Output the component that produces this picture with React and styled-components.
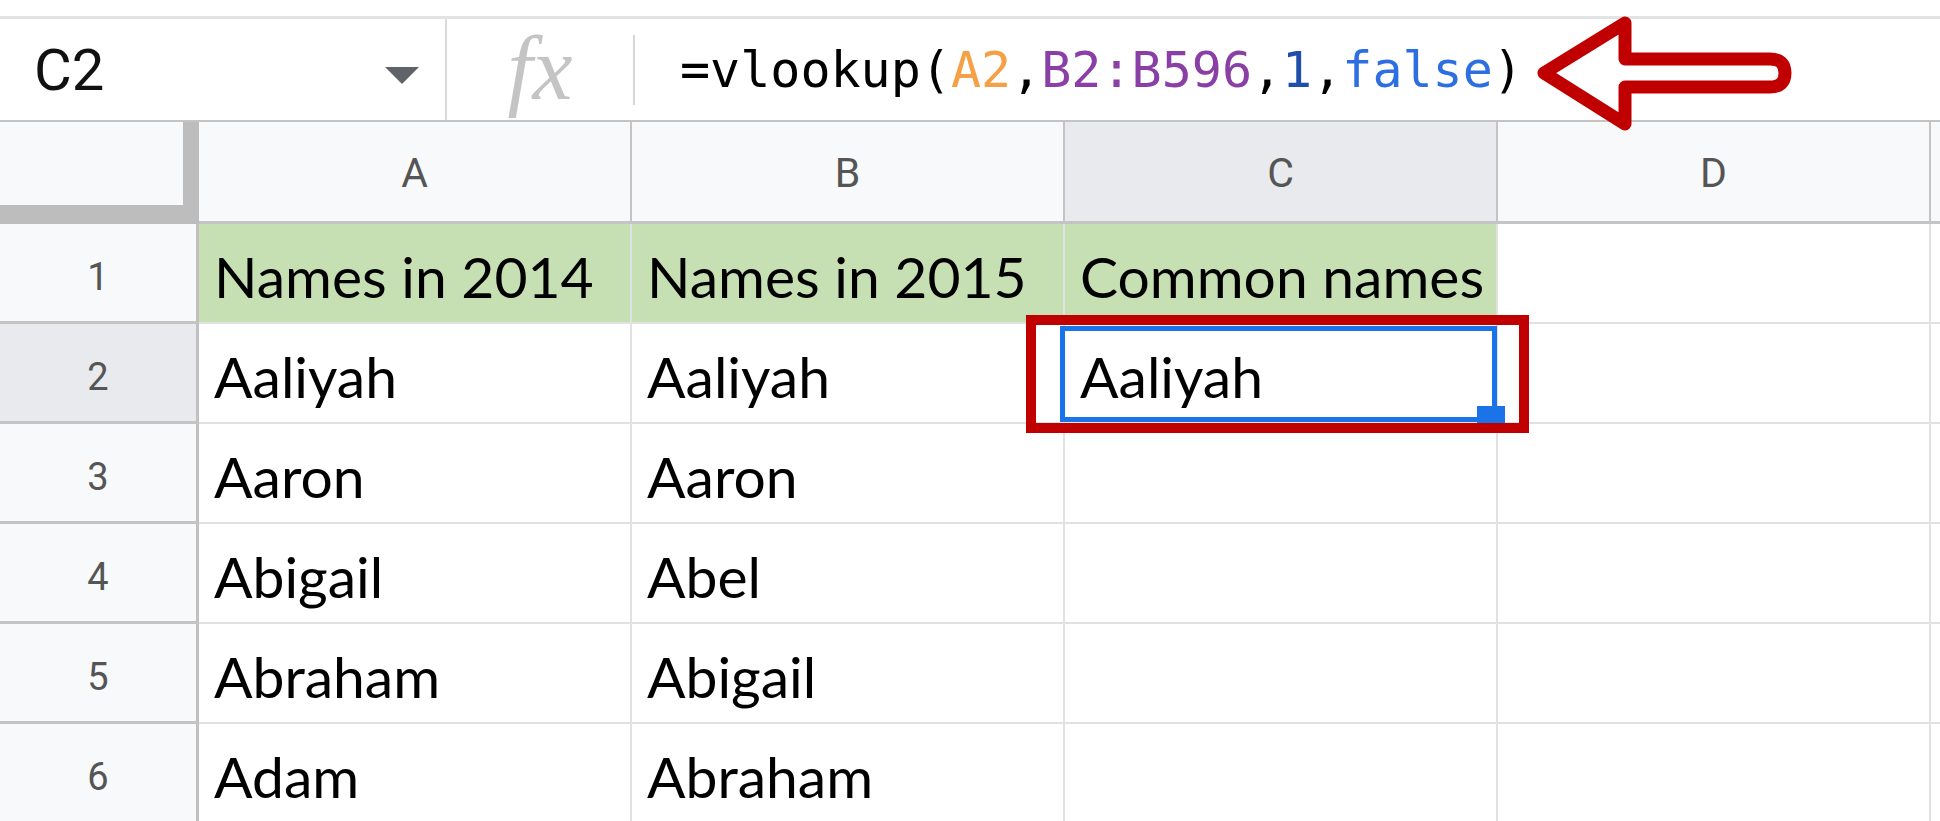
import React from 'react';
import styled, { createGlobalStyle } from 'styled-components';

const GlobalStyle = createGlobalStyle`
  html, body {
    margin: 0;
    padding: 0;
    background: #fff;
    overflow: hidden;
  }
`;

const columns = ['A', 'B', 'C', 'D'];

const rows = [
  { n: 1, cells: ['Names in 2014', 'Names in 2015', 'Common names', ''], green: true },
  { n: 2, cells: ['Aaliyah', 'Aaliyah', 'Aaliyah', ''] },
  { n: 3, cells: ['Aaron', 'Aaron', '', ''] },
  { n: 4, cells: ['Abigail', 'Abel', '', ''] },
  { n: 5, cells: ['Abraham', 'Abigail', '', ''] },
  { n: 6, cells: ['Adam', 'Abraham', '', ''] },
];

const formula = [
  { t: '=vlookup(', tone: 'plain' },
  { t: 'A2', tone: 'orange' },
  { t: ',', tone: 'plain' },
  { t: 'B2:B596', tone: 'purple' },
  { t: ',', tone: 'plain' },
  { t: '1', tone: 'number' },
  { t: ',', tone: 'plain' },
  { t: 'false', tone: 'blue' },
  { t: ')', tone: 'plain' },
];

const tones = {
  plain: '#000000',
  orange: '#f6a046',
  purple: '#8a3fa6',
  number: '#1f4fa8',
  blue: '#2d6fe0',
};

const App = () => {
  return (
    <Page>
      <GlobalStyle />
      <TopStrip />
      <FormulaBar>
        <NameBox>
          <CellRef>C2</CellRef>
          <Caret />
        </NameBox>
        <FxBox>fx</FxBox>
        <Divider />
        <FormulaText>
          {formula.map((p, i) => (
            <Token key={i} $tone={p.tone}>{p.t}</Token>
          ))}
        </FormulaText>
        <Arrow width="270" height="130" viewBox="0 0 270 130">
          <path
            d="M14,63 L95,13 L95,49 L240,49 Q255,49 255,63 Q255,77 240,77 L95,77 L95,114 Z"
            fill="none"
            stroke="#c00000"
            strokeWidth="13"
            strokeLinejoin="round"
          />
        </Arrow>
      </FormulaBar>

      <Sheet>
        <Corner />
        {columns.map((c) => (
          <ColHead key={c} $active={c === 'C'}>{c}</ColHead>
        ))}
        <ColHead $last />

        {rows.map((r) => (
          <React.Fragment key={r.n}>
            <RowHead $active={r.n === 2}>{r.n}</RowHead>
            {r.cells.map((v, i) => {
              const selected = r.n === 2 && i === 2;
              return (
                <Cell key={i} $green={r.green && i < 3} $selected={selected}>
                  {v}
                  {selected && (
                    <>
                      <SelectBorder />
                      <FillHandle />
                      <Highlight />
                    </>
                  )}
                </Cell>
              );
            })}
            <Cell $last />
          </React.Fragment>
        ))}
      </Sheet>
    </Page>
  );
};

const Page = styled.div`
  width: 1940px;
  height: 821px;
  overflow: hidden;
  background: #fff;
  position: relative;
`;

const TopStrip = styled.div`
  height: 16px;
  border-bottom: 3px solid #e2e3e5;
`;

const FormulaBar = styled.div`
  position: relative;
  display: flex;
  align-items: center;
  height: 101px;
  border-bottom: 2px solid #c4c4c4;
`;

const NameBox = styled.div`
  box-sizing: border-box;
  width: 447px;
  height: 100%;
  display: flex;
  align-items: center;
  justify-content: space-between;
  padding: 0 26px 0 34px;
  border-right: 2px solid #dadada;
`;

const CellRef = styled.span`
  font-family: Roboto, 'Liberation Sans', sans-serif;
  font-size: 58px;
  color: #111;
  line-height: 1;
`;

const Caret = styled.span`
  width: 0;
  height: 0;
  margin-top: 12px;
  border-left: 17px solid transparent;
  border-right: 17px solid transparent;
  border-top: 17px solid #5f6368;
`;

const FxBox = styled.div`
  width: 186px;
  text-align: center;
  font-family: 'Liberation Serif', serif;
  font-style: italic;
  font-size: 90px;
  line-height: 1;
  color: #c4c4c4;
  margin-top: -2px;
`;

const Divider = styled.div`
  width: 2px;
  height: 70px;
  background: #d6d6d6;
`;

const FormulaText = styled.div`
  padding-left: 45px;
  font-family: 'DejaVu Sans Mono', 'Liberation Mono', monospace;
  font-size: 50px;
  line-height: 1;
  white-space: nowrap;
`;

const Token = styled.span`
  color: ${(p) => tones[p.$tone]};
`;

const Arrow = styled.svg`
  position: absolute;
  left: 1530px;
  top: -9px;
  z-index: 5;
`;

const Sheet = styled.div`
  display: grid;
  grid-template-columns: 199px repeat(4, 433px) 1fr;
  grid-template-rows: 102px repeat(6, 100px);
`;

const Corner = styled.div`
  box-sizing: border-box;
  background: #f8f9fa;
  border-right: 16px solid #bdbdbd;
  border-bottom: 19px solid #bdbdbd;
`;

const ColHead = styled.div`
  box-sizing: border-box;
  display: flex;
  align-items: center;
  justify-content: center;
  padding-top: 3px;
  background: ${(p) => (p.$active ? '#e8eaed' : '#f8f9fa')};
  border-right: ${(p) => (p.$last ? 'none' : '2px solid #c4c4c4')};
  border-bottom: 3px solid #c4c4c4;
  font-family: Roboto, 'Liberation Sans', sans-serif;
  font-size: 41px;
  color: #555;
`;

const RowHead = styled.div`
  box-sizing: border-box;
  display: flex;
  align-items: center;
  justify-content: center;
  padding-top: 8px;
  background: ${(p) => (p.$active ? '#e8eaed' : '#f8f9fa')};
  border-right: 3px solid #c0c0c0;
  border-bottom: 3px solid #c4c4c4;
  font-family: Roboto, 'Liberation Sans', sans-serif;
  font-size: 38px;
  color: #555;
`;

const Cell = styled.div`
  box-sizing: border-box;
  position: ${(p) => (p.$selected ? 'relative' : 'static')};
  z-index: ${(p) => (p.$selected ? 2 : 'auto')};
  display: flex;
  align-items: flex-end;
  padding: 0 0 17px 15px;
  background: ${(p) => (p.$green ? '#c6e0b4' : '#fff')};
  border-right: ${(p) => (p.$last ? 'none' : '2px solid #e1e1e1')};
  border-bottom: 2px solid #e1e1e1;
  font-family: Lato, 'Open Sans', sans-serif;
  font-size: 57px;
  line-height: 1;
  color: #000;
  white-space: nowrap;
  overflow: visible;
`;

const SelectBorder = styled.div`
  position: absolute;
  top: 2px;
  left: -5px;
  right: -1px;
  bottom: 0;
  border: 5px solid #1a73e8;
`;

const FillHandle = styled.div`
  position: absolute;
  right: -9px;
  bottom: -11px;
  width: 28px;
  height: 27px;
  background: #1a73e8;
`;

const Highlight = styled.div`
  position: absolute;
  box-sizing: border-box;
  left: -39px;
  top: -9px;
  width: 503px;
  height: 118px;
  border: 10px solid #c00000;
  z-index: 3;
`;

export default App;
